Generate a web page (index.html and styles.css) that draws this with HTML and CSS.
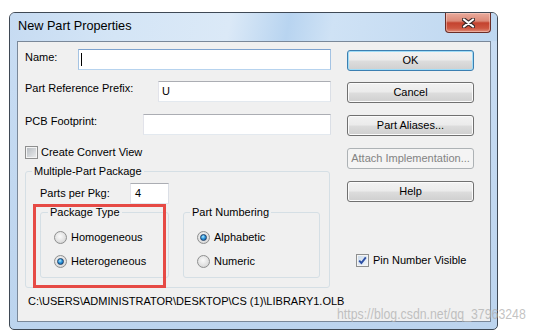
FILE: index.html
```html
<!DOCTYPE html>
<html>
<head>
<meta charset="utf-8">
<link rel="stylesheet" href="styles.css">
</head>
<body>
<div class="window">
  <div class="titlebar">
    <span class="title">New Part Properties</span>
    <div class="close">
      <svg width="13" height="10" viewBox="0 0 13 10">
        <path d="M2 1.5 L11 8.5 M11 1.5 L2 8.5" stroke="#3a2a2a" stroke-width="4.2" stroke-linecap="round"/>
        <path d="M2 1.5 L11 8.5 M11 1.5 L2 8.5" stroke="#ffffff" stroke-width="2.2" stroke-linecap="round"/>
      </svg>
    </div>
  </div>
  <div class="client">
    <div class="left">
      <div class="row r-name"><span class="lbl lbl-name">Name:</span><div class="input w-name focused"><span class="caret"></span></div></div>
      <div class="row r-prefix"><span class="lbl">Part Reference Prefix:</span><div class="input w-prefix">U</div></div>
      <div class="row r-pcb"><span class="lbl">PCB Footprint:</span><div class="input w-pcb"></div></div>
      <div class="check cv"><span class="cbox"></span><span>Create Convert View</span></div>
      <fieldset class="group multi">
        <legend>Multiple-Part Package</legend>
        <div class="ppk"><span class="lbl-ppk">Parts per Pkg:</span><div class="input w-ppk">4</div></div>
        <div class="subgroups">
          <fieldset class="group sub pkg-type">
            <legend class="leg-pkg">Package Type</legend>
            <div class="radio"><span class="rdot"></span><span>Homogeneous</span></div>
            <div class="radio"><span class="rdot on"></span><span>Heterogeneous</span></div>
          </fieldset>
          <fieldset class="group sub numbering">
            <legend>Part Numbering</legend>
            <div class="radio"><span class="rdot on"></span><span>Alphabetic</span></div>
            <div class="radio"><span class="rdot"></span><span>Numeric</span></div>
          </fieldset>
        </div>
      </fieldset>
      <div class="path">C:\USERS\ADMINISTRATOR\DESKTOP\CS (1)\LIBRARY1.OLB</div>
    </div>
    <div class="right">
      <div class="btn default">OK</div>
      <div class="btn">Cancel</div>
      <div class="btn gap12">Part Aliases...</div>
      <div class="btn gap12 disabled">Attach Implementation...</div>
      <div class="btn gap12">Help</div>
      <div class="check pin"><span class="cbox checked"><svg width="11" height="11" viewBox="0 0 11 11"><path d="M2.2 5.6 L4.4 8 L8.8 2.4" fill="none" stroke="#2d4fa5" stroke-width="1.9"/></svg></span><span>Pin Number Visible</span></div>
    </div>
  </div>
</div>
<div class="highlight"></div>
<div class="watermark">https://blog.csdn.net/qq_37963248</div>
</body>
</html>
```
FILE: styles.css
```css
html, body {
  margin: 0;
  padding: 0;
  background: #ffffff;
}
body {
  font-family: "Liberation Sans", Arial, sans-serif;
  font-size: 11px;
  color: #000;
  position: relative;
  width: 534px;
  height: 333px;
  overflow: hidden;
}
.window {
  margin: 12px 0 0 9px;
  width: 489px;
  height: 318px;
  box-sizing: border-box;
  border: 1px solid #3f4955;
  border-radius: 6px 6px 5px 5px;
  background: linear-gradient(#c9ddf3, #bcd4ee);
  display: flex;
  flex-direction: column;
}
.titlebar {
  height: 28px;
  flex: none;
  display: flex;
  justify-content: space-between;
  align-items: flex-start;
  padding-left: 8px;
  border-radius: 5px 5px 0 0;
  background: linear-gradient(100deg, #c6dbf2 0%, #d4e5f6 22%, #dbe9f7 45%, #b8d4f0 57%, #cfe2f5 66%, #bed7f0 100%);
}
.title {
  font-size: 12.7px;
  line-height: 27px;
  color: #000;
}
.close {
  width: 46px;
  height: 20px;
  margin-right: 6px;
  box-sizing: border-box;
  border: 1px solid #6b2d27;
  border-top: none;
  border-radius: 0 0 4px 4px;
  background: linear-gradient(#e9ab9d 0%, #dc8a78 42%, #c4432f 52%, #cd5640 80%, #e08d7a 100%);
  box-shadow: inset 0 0 0 1px rgba(255, 220, 210, 0.45);
  display: flex;
  align-items: center;
  justify-content: center;
}
.client {
  margin: 0 6px 0 7px;
  height: 281px;
  box-sizing: border-box;
  border: 1px solid #7a8899;
  background: #f0f0f0;
  display: flex;
  gap: 16px;
  padding: 7px 0 0 7px;
}
.left {
  width: 306px;
  flex: none;
}
.right {
  width: 127px;
  flex: none;
  display: flex;
  flex-direction: column;
}
.row {
  display: flex;
  justify-content: space-between;
  align-items: flex-start;
  height: 21px;
}
.lbl {
  line-height: 13px;
  padding-top: 1px;
}
.lbl-name {
  padding-top: 2px;
}
.r-prefix { margin-top: 11px; }
.r-pcb { margin-top: 12px; }
.input {
  height: 21px;
  box-sizing: border-box;
  border: 1px solid;
  border-color: #abadb3 #dbdfe6 #e3e9ef #e2e3ea;
  background: #fff;
  padding-left: 3px;
  line-height: 19px;
}
.input.focused {
  border-color: #7da2ce #a4c3e3 #b7d3ee #a4c3e3;
  padding-left: 2px;
}
.caret {
  display: inline-block;
  width: 1px;
  height: 13px;
  background: #000;
  margin-top: 3px;
  vertical-align: top;
}
.w-name { width: 253px; }
.w-prefix { width: 173px; }
.w-pcb { width: 188px; }
.w-ppk { width: 39px; padding-left: 4px; }
.check {
  display: flex;
  align-items: center;
  height: 13px;
  line-height: 13px;
}
.cv { margin-top: 11px; }
.cbox {
  width: 13px;
  height: 13px;
  box-sizing: border-box;
  border: 1px solid #8e8f8f;
  background: linear-gradient(135deg, #b3b8be, #eeeff0);
  box-shadow: inset 0 0 0 1px #f4f4f4;
  margin-right: 3px;
  flex: none;
  display: flex;
  align-items: center;
  justify-content: center;
}
.cbox.checked {
  background: linear-gradient(135deg, #c9d9ea, #f3f6fa);
  margin-right: 4px;
}
.group {
  margin: 0;
  padding: 0;
  border: 1px solid #d5dfe5;
  border-radius: 3px;
  min-width: 0;
}
.group legend {
  padding: 0 2px;
  margin-left: 6px;
  line-height: 14px;
  font-size: 11px;
}
.group legend.leg-pkg {
  margin-left: 7px;
}
.multi {
  width: 305px;
  box-sizing: border-box;
  margin-top: 5px;
  padding-bottom: 9px;
}
.ppk {
  display: flex;
  align-items: center;
  height: 21px;
  margin-top: 5px;
  padding-left: 14px;
}
.lbl-ppk {
  width: 90px;
  line-height: 13px;
}
.subgroups {
  display: flex;
  gap: 14px;
  padding-left: 14px;
  margin-top: 1px;
}
.sub {
  box-sizing: border-box;
  padding: 0 0 8px 0;
}
.pkg-type { width: 129px; }
.numbering { width: 137px; }
.radio {
  display: flex;
  align-items: center;
  height: 16px;
  line-height: 13px;
  margin-top: 10px;
  padding-left: 13px;
}
.radio + .radio { margin-top: 8px; }
.rdot {
  width: 13px;
  height: 13px;
  box-sizing: border-box;
  border-radius: 50%;
  border: 1px solid #8e8f8f;
  background: radial-gradient(circle at 45% 40%, #fafafa 0%, #e2e2e2 55%, #c9c9c9 100%);
  margin-right: 4px;
  flex: none;
  display: flex;
  align-items: center;
  justify-content: center;
}
.rdot.on::after {
  content: "";
  width: 7px;
  height: 7px;
  box-sizing: border-box;
  border-radius: 50%;
  border: 1px solid #1c3f68;
  background: radial-gradient(circle at 40% 35%, #b5ecff 0%, #2c97dd 45%, #0c4f96 100%);
}
.path {
  margin-top: 6px;
  padding-left: 3px;
  line-height: 14px;
  white-space: nowrap;
}
.btn {
  height: 21px;
  box-sizing: border-box;
  border: 1px solid #707070;
  border-radius: 3px;
  background: linear-gradient(#f2f2f2 0%, #ebebeb 49%, #dddddd 51%, #cfcfcf 100%);
  box-shadow: inset 0 0 0 1px #fbfbfb;
  text-align: center;
  line-height: 19px;
  margin-top: 11px;
  white-space: nowrap;
}
.btn.default {
  margin-top: 1px;
  border-color: #3c7fb1;
  box-shadow: inset 0 0 0 1px #9fdcf7;
}
.btn.gap12 { margin-top: 12px; }
.btn.disabled {
  border-color: #adb2b5;
  background: #f4f4f4;
  box-shadow: none;
  color: #838383;
}
.pin {
  margin-top: 52px;
  margin-left: 9px;
}
.highlight {
  position: absolute;
  left: 33px;
  top: 204px;
  width: 133px;
  height: 84px;
  box-sizing: border-box;
  border: 3px solid #e64a45;
}
.watermark {
  position: absolute;
  left: 337px;
  top: 305px;
  font-size: 15px;
  line-height: 18px;
  white-space: nowrap;
  color: rgba(175, 175, 175, 0.75);
  transform: scaleX(0.82);
  transform-origin: left top;
}
```
